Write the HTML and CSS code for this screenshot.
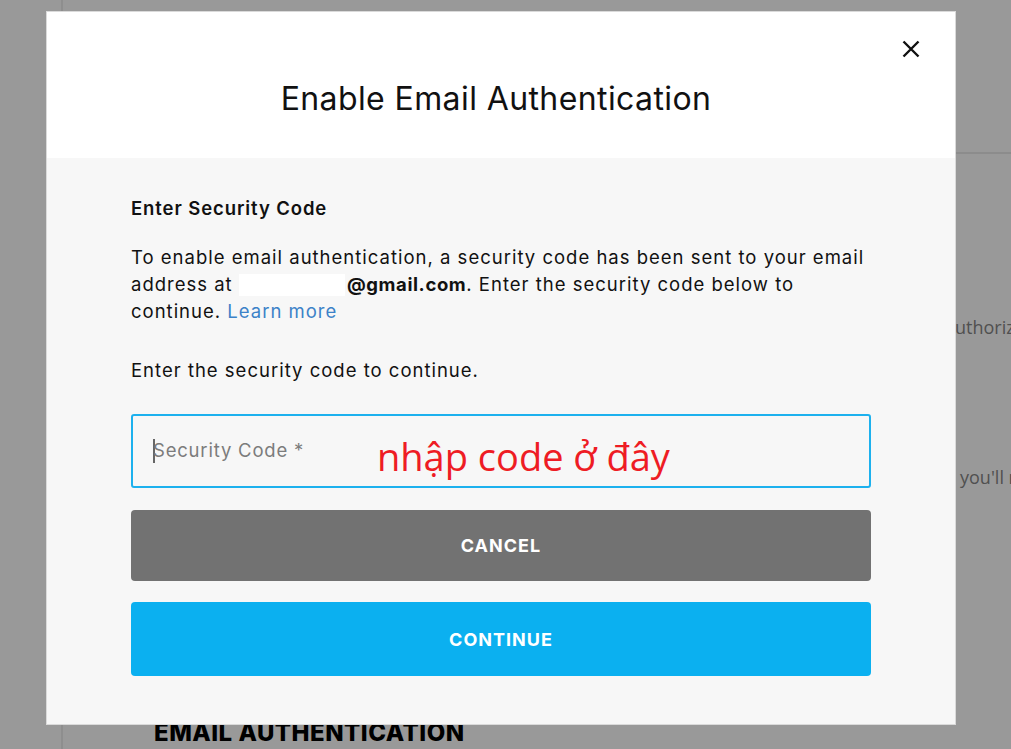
FILE: index.html
```html
<!DOCTYPE html>
<html lang="en">
<head>
<meta charset="utf-8">
<title>Enable Email Authentication</title>
<link rel="stylesheet" href="styles.css">
</head>
<body>
<div class="page">
  <aside class="sidebar"></aside>
  <main class="main">
    <div class="topbar"></div>
    <div class="bg-content">
      <p class="bg-line bg-line-1">authorize new devices</p>
      <p class="bg-line bg-line-2">you'll need a code</p>
      <h2 class="bg-heading">EMAIL AUTHENTICATION</h2>
    </div>
  </main>
</div>

<div class="modal" role="dialog" aria-labelledby="modal-title">
  <header class="modal-header">
    <h1 id="modal-title" class="modal-title">Enable Email Authentication</h1>
    <button class="close-btn" aria-label="Close">
      <svg width="18" height="18" viewBox="0 0 18 18"><path d="M1.5 1.5 L16.5 16.5 M16.5 1.5 L1.5 16.5" stroke="#111" stroke-width="2.4" fill="none"/></svg>
    </button>
  </header>
  <section class="modal-body">
    <h3 class="section-title">Enter Security Code</h3>
    <p class="desc">To enable email authentication, a security code has been sent to your email address at <span class="redacted"></span><strong>@gmail.com</strong>. Enter the security code below to continue. <a class="link" href="#">Learn more</a></p>
    <p class="desc prompt">Enter the security code to continue.</p>
    <div class="field">
      <span class="caret"></span>
      <span class="placeholder">Security Code *</span>
      <span class="annotation">nhập code ở đây</span>
    </div>
    <button class="btn btn-cancel">CANCEL</button>
    <button class="btn btn-continue">CONTINUE</button>
  </section>
</div>
</body>
</html>
```

FILE: styles.css
```css
* { box-sizing: border-box; }
html, body { margin: 0; padding: 0; }
body {
  width: 1011px;
  height: 749px;
  overflow: hidden;
  background: #999999;
  font-family: "Inter", "Liberation Sans", sans-serif;
  position: relative;
}

.page {
  display: flex;
  height: 749px;
}
.sidebar {
  width: 63px;
  flex: none;
  border-right: 2px solid #8e8e8e;
}
.main {
  flex: 1;
  min-width: 0;
  overflow: hidden;
  display: flex;
  flex-direction: column;
}
.topbar {
  height: 154px;
  border-bottom: 2px solid #8c8c8c;
  flex: none;
}
.bg-content {
  padding-left: 91px;
  display: flex;
  flex-direction: column;
}
.bg-line {
  margin: 0;
  white-space: nowrap;
  font-size: 18px;
  line-height: 24px;
  color: #505050;
  font-family: "Open Sans", sans-serif;
}
.bg-line-1 { margin-top: 161px; margin-left: 791px; }
.bg-line-2 { margin-top: 126px; margin-left: 806px; }
.bg-heading {
  margin: 229px 0 0;
  font-size: 24px;
  line-height: 29px;
  font-weight: 800;
  color: #000;
  letter-spacing: 0.5px;
  white-space: nowrap;
}

.modal {
  position: absolute;
  left: 46px;
  top: 11px;
  width: 910px;
  height: 714px;
  border: 1px solid #dadada;
  background: #f7f7f7;
  display: flex;
  flex-direction: column;
}
.modal-header {
  position: relative;
  height: 146px;
  background: #ffffff;
  display: flex;
  align-items: center;
  justify-content: center;
  padding-right: 10px;
  padding-top: 26px;
}
.modal-title {
  margin: 0;
  font-size: 32px;
  font-weight: 400;
  color: #111;
  letter-spacing: 0.4px;
}
.close-btn {
  position: absolute;
  right: 35px;
  top: 28px;
  width: 18px;
  height: 18px;
  padding: 0;
  border: 0;
  background: none;
  display: flex;
}

.modal-body {
  flex: 1;
  padding: 37px 84px 0 84px;
  display: flex;
  flex-direction: column;
}
.section-title {
  margin: 0;
  font-size: 18.5px;
  line-height: 27px;
  font-weight: 600;
  letter-spacing: 0.9px;
  color: #111;
}
.desc {
  margin: 22px 0 0;
  font-size: 18.5px;
  line-height: 27px;
  letter-spacing: 1px;
  color: #111;
}
.desc strong { font-weight: 700; letter-spacing: 0.6px; }
.redacted {
  display: inline-block;
  width: 106px;
  height: 22px;
  background: #ffffff;
  vertical-align: -5px;
  margin-right: 2px;
}
.link { color: #3c82c8; text-decoration: none; }
.prompt { margin-top: 32px; }

.field {
  position: relative;
  margin-top: 30px;
  height: 74px;
  border: 2px solid #1db1ee;
  border-radius: 3px;
  display: flex;
  align-items: center;
  padding-left: 20px;
}
.caret {
  width: 2px;
  height: 24px;
  background: #666;
  margin-right: -2px;
}
.placeholder {
  font-size: 18.5px;
  letter-spacing: 0.8px;
  color: #7c7c7c;
  margin-top: -2px;
}
.annotation {
  position: absolute;
  left: 244px;
  top: 14px;
  font-family: "Open Sans", "Noto Sans", sans-serif;
  font-size: 38px;
  color: #ee1c24;
  white-space: nowrap;
}

.btn {
  border: 0;
  color: #fff;
  font-family: "Inter", "Liberation Sans", sans-serif;
  font-size: 18px;
  font-weight: 700;
  letter-spacing: 1px;
  border-radius: 4px;
  width: 100%;
  cursor: pointer;
}
.btn-cancel {
  margin-top: 22px;
  height: 71px;
  background: #727272;
}
.btn-continue {
  margin-top: 21px;
  height: 74px;
  background: #0bb0f0;
}
```
